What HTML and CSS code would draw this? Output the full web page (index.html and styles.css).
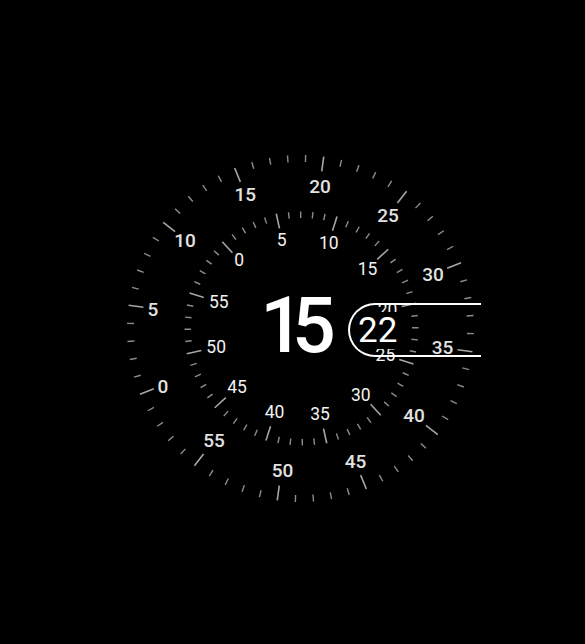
FILE: index.html
```html
<!DOCTYPE html>
<html>
<head>
<meta charset="utf-8">
<link rel="stylesheet" href="styles.css">
</head>
<body>
<div class="stage">
  <svg class="dial" width="585" height="644" viewBox="0 0 585 644" xmlns="http://www.w3.org/2000/svg">
    <defs>
      <g id="outer5">
        <line class="tick-long" x1="0" y1="-173.5" x2="0" y2="-158.5"/>
        <line class="tick" x1="0" y1="-173.5" x2="0" y2="-166.5" transform="rotate(6)"/>
        <line class="tick" x1="0" y1="-173.5" x2="0" y2="-166.5" transform="rotate(12)"/>
        <line class="tick" x1="0" y1="-173.5" x2="0" y2="-166.5" transform="rotate(18)"/>
        <line class="tick" x1="0" y1="-173.5" x2="0" y2="-166.5" transform="rotate(24)"/>
      </g>
      <g id="inner5">
        <line class="tick-long" x1="0" y1="-117.5" x2="0" y2="-102.5"/>
        <line class="tick" x1="0" y1="-117" x2="0" y2="-110.5" transform="rotate(6)"/>
        <line class="tick" x1="0" y1="-117" x2="0" y2="-110.5" transform="rotate(12)"/>
        <line class="tick" x1="0" y1="-117" x2="0" y2="-110.5" transform="rotate(18)"/>
        <line class="tick" x1="0" y1="-117" x2="0" y2="-110.5" transform="rotate(24)"/>
      </g>
    </defs>
    <g transform="translate(300.5 328.5)">
      <use href="#outer5" transform="rotate(247.7)"/>
      <use href="#outer5" transform="rotate(277.7)"/>
      <use href="#outer5" transform="rotate(307.7)"/>
      <use href="#outer5" transform="rotate(337.7)"/>
      <use href="#outer5" transform="rotate(7.7)"/>
      <use href="#outer5" transform="rotate(37.7)"/>
      <use href="#outer5" transform="rotate(67.7)"/>
      <use href="#outer5" transform="rotate(97.7)"/>
      <use href="#outer5" transform="rotate(127.7)"/>
      <use href="#outer5" transform="rotate(157.7)"/>
      <use href="#outer5" transform="rotate(187.7)"/>
      <use href="#outer5" transform="rotate(217.7)"/>
    </g>
    <g transform="translate(301.5 328.5)">
      <use href="#inner5" transform="rotate(317.6)"/>
      <use href="#inner5" transform="rotate(347.6)"/>
      <use href="#inner5" transform="rotate(17.6)"/>
      <use href="#inner5" transform="rotate(47.6)"/>
      <use href="#inner5" transform="rotate(77.6)"/>
      <use href="#inner5" transform="rotate(107.6)"/>
      <use href="#inner5" transform="rotate(137.6)"/>
      <use href="#inner5" transform="rotate(167.6)"/>
      <use href="#inner5" transform="rotate(197.6)"/>
      <use href="#inner5" transform="rotate(227.6)"/>
      <use href="#inner5" transform="rotate(257.6)"/>
      <use href="#inner5" transform="rotate(287.6)"/>
    </g>
    <g class="outer-labels">
      <text x="162.8" y="392.8">0</text>
      <text x="153" y="315.8">5</text>
      <text x="185" y="247.1">10</text>
      <text x="245.3" y="201">15</text>
      <text x="320" y="192.6">20</text>
      <text x="388" y="222.1">25</text>
      <text x="433" y="281.3">30</text>
      <text x="442.5" y="354.3">35</text>
      <text x="414" y="422.3">40</text>
      <text x="355.5" y="468.3">45</text>
      <text x="282.5" y="476.8">50</text>
      <text x="214" y="447.3">55</text>
    </g>
    <g class="inner-labels">
      <text x="239.2" y="266.2">0</text>
      <text x="281.7" y="245.7">5</text>
      <text x="328.8" y="249.2">10</text>
      <text x="367.5" y="275">15</text>
      <text x="387.5" y="315.8">20</text>
      <text x="385.4" y="361.1">25</text>
      <text x="360.8" y="400.7">30</text>
      <text x="320" y="420.2">35</text>
      <text x="274.5" y="417.9">40</text>
      <text x="237" y="393.2">45</text>
      <text x="216.2" y="353.2">50</text>
      <text x="218.8" y="308.4">55</text>
    </g>
  </svg>
  <div class="hour">15</div>
  <div class="minute-pill"><span class="minute">22</span></div>
</div>
</body>
</html>
```
FILE: styles.css
```css
html, body {
  margin: 0;
  padding: 0;
  background: #000;
}

body {
  font-family: Roboto, "Liberation Sans", sans-serif;
  color: #fff;
}

.stage {
  position: relative;
  width: 585px;
  height: 644px;
  overflow: hidden;
  background: #000;
}

.dial {
  display: block;
}

.tick {
  stroke: #8c8c8c;
  stroke-width: 1.4;
}

.tick-long {
  stroke: #a6a6a6;
  stroke-width: 1.6;
}

.outer-labels text {
  font-family: Roboto, "Liberation Sans", sans-serif;
  font-size: 19px;
  font-weight: 500;
  fill: #e2e2e2;
  text-anchor: middle;
}

.inner-labels text {
  font-family: Roboto, "Liberation Sans", sans-serif;
  font-size: 17.5px;
  font-weight: 400;
  fill: #f2f2f2;
  text-anchor: middle;
}

.hour {
  position: absolute;
  left: 232px;
  top: 288px;
  width: 120px;
  text-align: center;
  font-size: 77px;
  line-height: 1;
  font-weight: 500;
  letter-spacing: -12px;
  color: #fff;
}

.minute-pill {
  position: absolute;
  left: 348px;
  top: 303px;
  width: 133px;
  height: 54px;
  box-sizing: border-box;
  border: 2px solid #fff;
  border-right: none;
  border-radius: 27px 0 0 27px;
  display: flex;
  align-items: center;
  padding-left: 8px;
}

.minute {
  font-size: 35px;
  line-height: 37px;
  background: #000;
  color: #fff;
}
```
